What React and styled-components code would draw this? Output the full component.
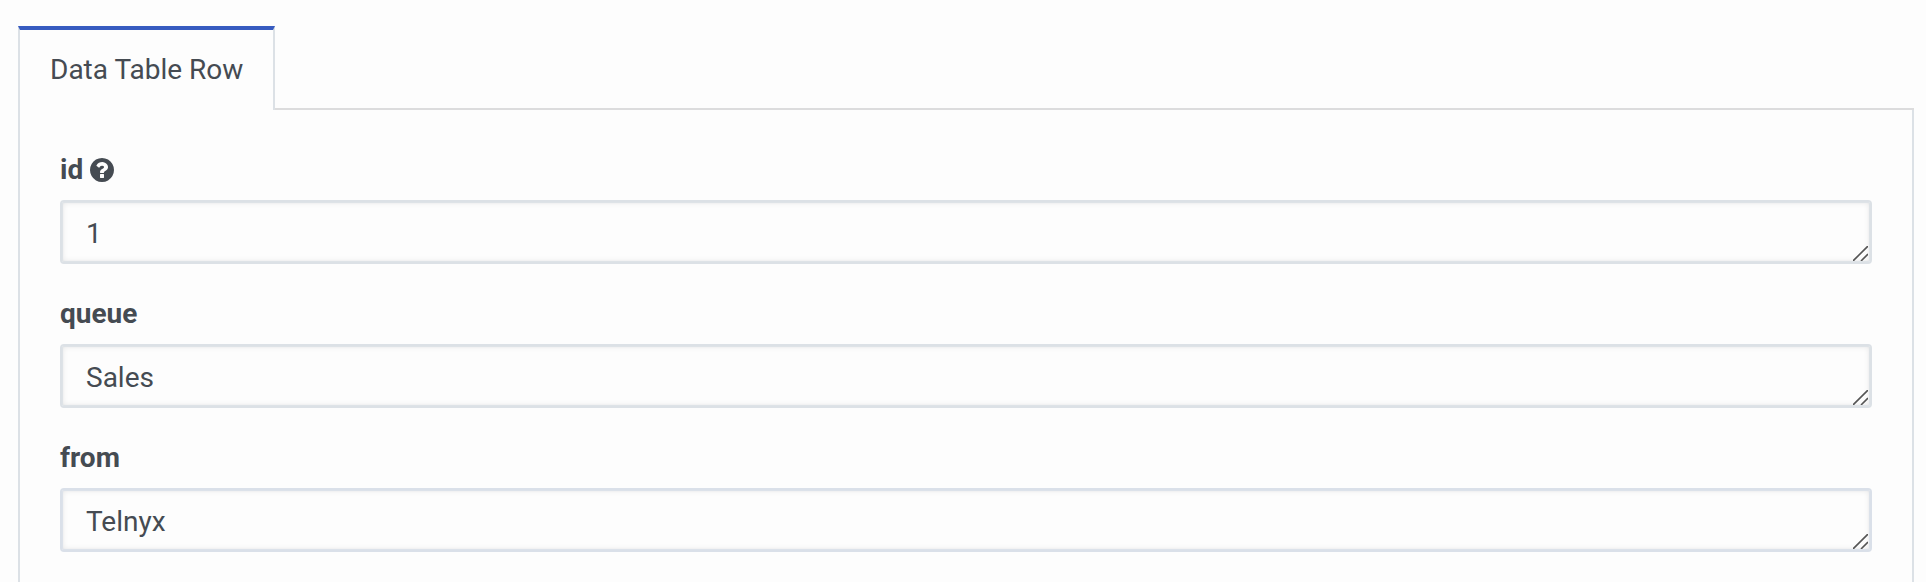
import React from "react";
import styled, { createGlobalStyle } from "styled-components";

const GlobalStyle = createGlobalStyle`
  *, *::before, *::after { box-sizing: border-box; }
  body {
    margin: 0;
    background: #fdfdfd;
    color: #454b52;
    font: 28px/36px Roboto, sans-serif;
    overflow: hidden;
  }
`;

const Page = styled.main`
  display: flex;
  flex-direction: column;
  height: 582px;
  padding: 26px 12px 0 18px;
`;

const TabBar = styled.div`
  display: flex;
  height: 84px;
`;

const Tab = styled.div`
  width: 257px;
  padding: 22px 0 0 30px;
  border: solid #dce1e6;
  border-width: 4px 2px 0;
  border-top-color: #375bc0;
  white-space: nowrap;
`;

const TabSpacer = styled.div`
  flex: 1;
  border-bottom: 2px solid #dcdcdd;
`;

const Panel = styled.section`
  display: flex;
  flex: 1;
  flex-direction: column;
  gap: 32px;
  padding: 42px 40px 0;
  border: solid #dce1e6;
  border-width: 0 2px;
`;

const Field = styled.div`
  display: flex;
  flex-direction: column;
  gap: 12px;
`;

const Label = styled.label`
  display: flex;
  align-items: center;
  gap: 7px;
  height: 36px;
  font-weight: 700;
`;

const HelpIcon = styled.svg`
  width: 24px;
  height: 24px;
  margin-top: -1px;
  fill: currentColor;
`;

const InputFrame = styled.div`
  position: relative;
  display: flex;
  height: 64px;
`;

const TextArea = styled.textarea`
  flex: 1;
  height: 64px;
  margin: 0;
  padding: 14px 24px 10px;
  border: 2px solid ${(p) => p.$border};
  border-radius: 4px;
  background: #fdfdfd;
  box-shadow: inset 0 0 1px 1px ${(p) => p.$border}, inset 0 0 6px rgba(0, 0, 0, 0.11);
  color: inherit;
  font: inherit;
  outline: none;
  overflow: hidden;
  resize: none;
`;

const Grip = styled.svg`
  position: absolute;
  right: 4px;
  bottom: 3px;
  width: 15px;
  height: 15px;
  pointer-events: none;
`;

const fields = [
  { name: "id", value: "1", help: true, border: "#dce1e6" },
  { name: "queue", value: "Sales", border: "#dce1e6" },
  { name: "from", value: "Telnyx", border: "#dae0e9" },
];

export default function App() {
  return (
    <Page>
      <GlobalStyle />
      <TabBar>
        <Tab>Data Table Row</Tab>
        <TabSpacer />
      </TabBar>
      <Panel>
        {fields.map(({ name, value, help, border }) => (
          <Field key={name}>
            <Label htmlFor={name}>
              {name}
              {help && (
                <HelpIcon viewBox="128 128 1536 1536" aria-hidden="true">
                  <path d="M1024 1376v-192q0-14-9-23t-23-9h-192q-14 0-23 9t-9 23v192q0 14 9 23t23 9h192q14 0 23-9t9-23zm256-672q0-88-55.5-163t-138.5-116-170-41q-243 0-371 213-15 24 8 42l132 100q7 6 19 6 16 0 25-12 53-68 86-92 34-24 86-24 48 0 85.5 26t37.5 59q0 38-20 61t-68 45q-63 28-115.5 86.5t-52.5 125.5v36q0 14 9 23t23 9h192q14 0 23-9t9-23q0-19 21.5-49.5t54.5-49.5q32-18 49-28.5t46-35 44.5-48 28-60.5 12.5-81zm384 192q0 209-103 385.5t-279.5 279.5-385.5 103-385.5-103-279.5-279.5-103-385.5 103-385.5 279.5-279.5 385.5-103 385.5 103 279.5 279.5 103 385.5z" />
                </HelpIcon>
              )}
            </Label>
            <InputFrame>
              <TextArea id={name} rows={1} defaultValue={value} spellCheck={false} $border={border} />
              <Grip viewBox="0 0 15 15" fill="none">
                <path d="M0 15 15 0M8 15 15 8" stroke="#555" strokeWidth="1.6" />
              </Grip>
            </InputFrame>
          </Field>
        ))}
      </Panel>
    </Page>
  );
}
